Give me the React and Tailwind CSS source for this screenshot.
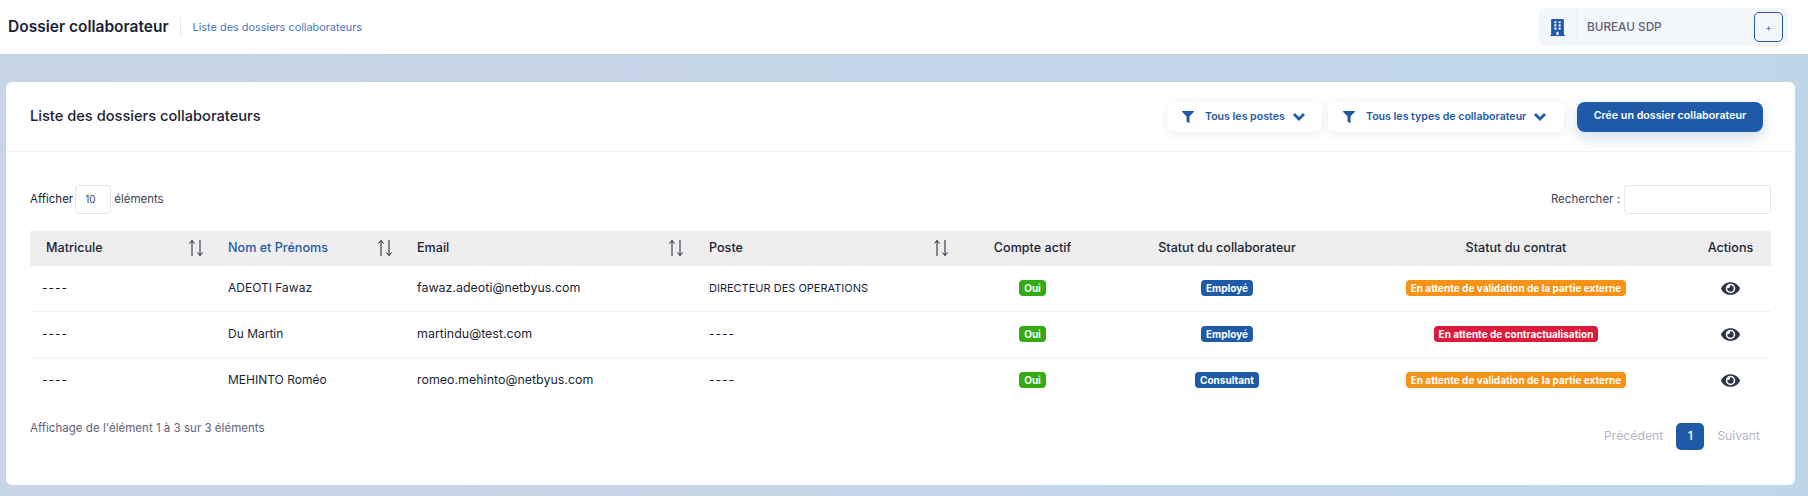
import React from "react";
import { FaBuilding, FaEye, FaFilter } from "react-icons/fa";

const rows = [
  {
    matricule: "----",
    name: "ADEOTI Fawaz",
    email: "fawaz.adeoti@netbyus.com",
    poste: "DIRECTEUR DES OPERATIONS",
    statut: "Employé",
    contrat: "En attente de validation de la partie externe",
    contratColor: "bg-[#f69215]",
  },
  {
    matricule: "----",
    name: "Du Martin",
    email: "martindu@test.com",
    poste: "----",
    statut: "Employé",
    contrat: "En attente de contractualisation",
    contratColor: "bg-[#dc1a3c]",
  },
  {
    matricule: "----",
    name: "MEHINTO Roméo",
    email: "romeo.mehinto@netbyus.com",
    poste: "----",
    statut: "Consultant",
    contrat: "En attente de validation de la partie externe",
    contratColor: "bg-[#f69215]",
  },
];

const SortIcon = () => (
  <svg width="16" height="18" viewBox="0 0 16 18" fill="none" stroke="#1a1f36" strokeWidth="1">
    <path d="M4 17V1.5M1.5 4.5L4 1.5L6.5 4.5" />
    <path d="M12 1V16.5M9.5 13.5L12 16.5L14.5 13.5" />
  </svg>
);

const Chevron = () => (
  <svg width="12" height="9" viewBox="0 0 12 9" fill="none" stroke="currentColor" strokeWidth="2.8" className="ml-[8px]">
    <path d="M1 2L6 7L11 2" />
  </svg>
);

const Badge = ({ color, children }) => (
  <span className={`inline-block rounded-[4px] px-[5px] py-px text-[10px] leading-[14px] font-bold text-white ${color}`}>
    {children}
  </span>
);

const FilterButton = ({ label, width }) => (
  <button className={`flex h-[30px] items-center rounded-lg bg-white pl-[15px] text-[10.6px] font-semibold text-[#1e5aa8] shadow-[0_2px_10px_rgba(80,100,140,0.12)] ${width}`}>
    <FaFilter className="mr-[11px] h-[12px] w-[12px]" />
    <span>{label}</span>
    <Chevron />
  </button>
);

const HeadCell = ({ label, blue, pad }) => (
  <th className={`pl-4 font-medium ${pad}`}>
    <div className="flex items-center justify-between">
      <span className={blue ? "text-[#1e5aa8]" : ""}>{label}</span>
      <SortIcon />
    </div>
  </th>
);

const App = () => {
  return (
    <div className="h-[496px] overflow-hidden bg-gradient-to-r from-[#c9d5e6] to-[#bfd6e9] font-['Inter','Liberation_Sans',sans-serif] text-[#1a1f36]">
      {/* Top bar */}
      <header className="flex h-[54px] items-center justify-between bg-white pl-2 pr-5">
        <div className="flex items-center">
          <h1 className="border-r border-[#e5e8ef] pr-[11px] text-[15.5px] leading-5 font-semibold">Dossier collaborateur</h1>
          <span className="ml-3 text-[10.9px] text-[#4a78bb]">Liste des dossiers collaborateurs</span>
        </div>
        <div className="flex h-[38px] w-[250px] items-center rounded-md bg-[#f3f6fa]">
          <div className="flex h-full w-[39px] items-center justify-center border-r border-[#eef1f6]">
            <FaBuilding className="h-[17px] w-[15px] text-[#1e5aa8]" />
          </div>
          <span className="ml-[10px] flex-1 pt-px text-[11.75px] font-medium text-[#5e6278]">BUREAU SDP</span>
          <button className="mr-[5px] flex h-[30px] w-[29px] items-center justify-center rounded-[5px] border border-[#1e5aa8] text-[10px] text-[#4a78bb]">+</button>
        </div>
      </header>

      {/* Card */}
      <main className="mx-[6px] mt-7 h-[403px] w-[1789px] rounded-md bg-white">
        <div className="flex h-[70px] items-center justify-between border-b border-[#f2f3f7] pl-6 pr-[32px]">
          <h2 className="text-[14.65px] font-medium">Liste des dossiers collaborateurs</h2>
          <div className="flex items-center">
            <FilterButton label="Tous les postes" width="w-[155px]" />
            <div className="w-[6px]" />
            <FilterButton label="Tous les types de collaborateur" width="w-[236px]" />
            <button className="ml-[13px] h-[30px] w-[186px] rounded-lg bg-[#1e5aa8] text-[10.7px] font-semibold text-white shadow-[0_6px_14px_rgba(30,90,168,0.2)]">
              Crée un dossier collaborateur
            </button>
          </div>
        </div>

        <div className="pl-6 pr-6">
          <div className="mt-[33px] flex h-[29px] items-center justify-between text-[11.5px]">
            <div className="flex items-center">
              <span>Afficher</span>
              <div className="ml-[2px] flex h-[29px] w-[36px] items-center rounded-[4px] border border-[#e4e6ef] pl-[9px] text-[10px] text-[#3f4254]">10</div>
              <span className="ml-[3px] text-[#3f4254]">éléments</span>
            </div>
            <div className="flex items-center">
              <span className="mr-[4px] text-[#3f4254]">Rechercher :</span>
              <div className="h-[29px] w-[147px] rounded-[4px] border border-[#e4e6ef]" />
            </div>
          </div>

          <table className="mt-[17px] w-[1741px] table-fixed border-collapse text-[12px]">
            <colgroup>
              <col className="w-[182px]" />
              <col className="w-[189px]" />
              <col className="w-[292px]" />
              <col className="w-[260px]" />
              <col className="w-[159px]" />
              <col className="w-[230px]" />
              <col className="w-[348px]" />
              <col className="w-[81px]" />
            </colgroup>
            <thead>
              <tr className="h-[35px] bg-[#eeeeee] text-left text-[12.6px]">
                <HeadCell label="Matricule" pad="pr-[8px]" />
                <HeadCell label="Nom et Prénoms" blue pad="pr-[8px]" />
                <HeadCell label="Email" pad="pr-[9px]" />
                <HeadCell label="Poste" pad="pr-[4px]" />
                <th className="text-center font-medium">Compte actif</th>
                <th className="text-center font-medium">Statut du collaborateur</th>
                <th className="text-center font-medium">Statut du contrat</th>
                <th className="text-center font-medium">Actions</th>
              </tr>
            </thead>
            <tbody>
              {rows.map((row, i) => (
                <tr
                  key={row.email}
                  className={`${i === 0 ? "h-[45px]" : "h-[46px]"} ${i < 2 ? "border-b border-[#eff0f4]" : ""}`}
                >
                  <td className="pl-3 tracking-[1px]">{row.matricule}</td>
                  <td className="pl-4">{row.name}</td>
                  <td className="pl-4 text-[12.45px]">{row.email}</td>
                  <td className={`pl-4 ${row.poste === "----" ? "text-[12px] tracking-[1px]" : "text-[11px]"}`}>{row.poste}</td>
                  <td className="text-center">
                    <Badge color="bg-[#32ac0f]">Oui</Badge>
                  </td>
                  <td className="text-center">
                    <Badge color="bg-[#1e5aa8]">{row.statut}</Badge>
                  </td>
                  <td className="text-center">
                    <Badge color={row.contratColor}>{row.contrat}</Badge>
                  </td>
                  <td>
                    <FaEye className="mx-auto h-[17px] w-[19px] text-[#2b3648]" />
                  </td>
                </tr>
              ))}
            </tbody>
          </table>

          <div className="flex items-start justify-between">
            <p className="mt-[17px] text-[11.55px] text-[#5e6278]">Affichage de l'élément 1 à 3 sur 3 éléments</p>
            <div className="mt-[20px] flex items-center pr-[11px] text-[12.2px] text-[#b5b5c3]">
              <span>Précédent</span>
              <span className="mx-[13px] flex h-[27px] w-[28px] items-center justify-center rounded-[5px] bg-[#1e5aa8] font-medium text-white">1</span>
              <span>Suivant</span>
            </div>
          </div>
        </div>
      </main>
    </div>
  );
};

export default App;
